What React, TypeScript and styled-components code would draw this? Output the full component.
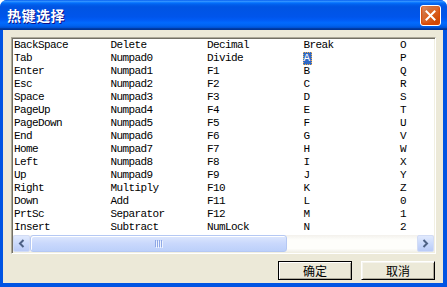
import React from 'react';
import styled, { createGlobalStyle } from 'styled-components';

const GlobalStyle = createGlobalStyle`
  html, body {
    margin: 0;
    padding: 0;
    background: #ffffff;
  }
`;

const columns: string[][] = [
  ['BackSpace', 'Tab', 'Enter', 'Esc', 'Space', 'PageUp', 'PageDown', 'End', 'Home', 'Left', 'Up', 'Right', 'Down', 'PrtSc', 'Insert'],
  ['Delete', 'Numpad0', 'Numpad1', 'Numpad2', 'Numpad3', 'Numpad4', 'Numpad5', 'Numpad6', 'Numpad7', 'Numpad8', 'Numpad9', 'Multiply', 'Add', 'Separator', 'Subtract'],
  ['Decimal', 'Divide', 'F1', 'F2', 'F3', 'F4', 'F5', 'F6', 'F7', 'F8', 'F9', 'F10', 'F11', 'F12', 'NumLock'],
  ['Break', 'A', 'B', 'C', 'D', 'E', 'F', 'G', 'H', 'I', 'J', 'K', 'L', 'M', 'N'],
  ['O', 'P', 'Q', 'R', 'S', 'T', 'U', 'V', 'W', 'X', 'Y', 'Z', '0', '1', '2'],
];

const keys = columns.flat();

const HotkeyDialog = () => {
  return (
    <Window>
      <TitleBar>
        <Title>热键选择</Title>
        <CloseButton>
          <svg width="11" height="11" viewBox="0 0 11 11">
            <path d="M1.5 1.5 L9.5 9.5 M9.5 1.5 L1.5 9.5" stroke="#ffffff" strokeWidth="2" strokeLinecap="square" />
          </svg>
        </CloseButton>
      </TitleBar>
      <Client>
        <ListBox>
          <Items>
            {keys.map((k) => (
              <Item key={k}>
                <Label $selected={k === 'A'}>{k}</Label>
              </Item>
            ))}
          </Items>
          <ScrollBar>
            <ArrowButton>
              <svg width="7" height="9" viewBox="0 0 7 9">
                <path d="M5.5 1 L2 4.5 L5.5 8" stroke="#4d6185" strokeWidth="2" fill="none" />
              </svg>
            </ArrowButton>
            <Thumb>
              <Grip>
                <i />
                <i />
                <i />
                <i />
              </Grip>
            </Thumb>
            <Track />
            <ArrowButton>
              <svg width="7" height="9" viewBox="0 0 7 9">
                <path d="M1.5 1 L5 4.5 L1.5 8" stroke="#4d6185" strokeWidth="2" fill="none" />
              </svg>
            </ArrowButton>
          </ScrollBar>
        </ListBox>
        <ButtonRow>
          <Button $default>确定</Button>
          <Button>取消</Button>
        </ButtonRow>
      </Client>
    </Window>
  );
};

export default function App() {
  return (
    <>
      <GlobalStyle />
      <HotkeyDialog />
    </>
  );
}

const Window = styled.div`
  width: 447px;
  height: 287px;
  display: flex;
  flex-direction: column;
  background: #0054e3;
  border-radius: 7px 7px 0 0;
  overflow: hidden;
  box-sizing: border-box;
`;

const TitleBar = styled.div`
  height: 30px;
  flex: none;
  display: flex;
  align-items: center;
  justify-content: space-between;
  padding: 0 6px 0 7px;
  background: linear-gradient(
    to bottom,
    #0058ee 0%,
    #3593ff 4%,
    #288eff 6%,
    #127dff 8%,
    #036ffc 10%,
    #0262ee 14%,
    #0057e5 20%,
    #0054e3 24%,
    #0055eb 56%,
    #005bf5 66%,
    #026afe 76%,
    #0062ef 86%,
    #0052d6 92%,
    #0040ab 94%,
    #003092 100%
  );
`;

const Title = styled.span`
  font-family: 'Noto Sans CJK SC', sans-serif;
  font-size: 14px;
  font-weight: bold;
  color: #ffffff;
  text-shadow: 1px 1px #0f1089;
  letter-spacing: 0.5px;
  margin-top: -1px;
`;

const CloseButton = styled.div`
  width: 21px;
  height: 21px;
  box-sizing: border-box;
  display: flex;
  align-items: center;
  justify-content: center;
  border: 1px solid #ffffff;
  border-radius: 3px;
  background: radial-gradient(circle at 85% 85%, #cc4600 0%, #dc6527 55%, #cd7546 70%, #e38a5e 90%);
  box-shadow: inset 0 -1px 2px 1px #da4600;
`;

const Client = styled.div`
  flex: 1;
  margin: 0 4px 4px 3px;
  background: #ece9d8;
  padding: 7px 7px 0 8px;
  display: flex;
  flex-direction: column;
`;

const ListBox = styled.div`
  width: 425px;
  height: 217px;
  box-sizing: border-box;
  background: #ffffff;
  border: 1px solid;
  border-color: #aca899 #ffffff #ffffff #aca899;
  box-shadow: inset 1px 1px #716f64, inset -1px -1px #f1efe2;
  padding: 1px;
  display: flex;
  flex-direction: column;
  overflow: hidden;
`;

const Items = styled.div`
  height: 196px;
  display: grid;
  grid-auto-flow: column;
  grid-template-rows: repeat(15, 13px);
  grid-auto-columns: 96.5px;
  align-content: start;
  overflow: hidden;
`;

const Item = styled.div`
  display: flex;
  align-items: center;
  height: 13px;
`;

const Label = styled.span<{ $selected?: boolean }>`
  font-family: 'Liberation Mono', monospace;
  font-size: 11px;
  letter-spacing: -0.6px;
  line-height: 11px;
  padding: 0 1px 0 0;
  border: 1px dotted ${(p) => (p.$selected ? '#f0b050' : 'transparent')};
  background: ${(p) => (p.$selected ? '#316ac5' : 'transparent')};
  color: ${(p) => (p.$selected ? '#ffffff' : '#000000')};
  white-space: nowrap;
`;

const ScrollBar = styled.div`
  height: 17px;
  flex: none;
  display: flex;
  background: linear-gradient(to bottom, #f3f1ec 0%, #fefefb 30%, #fefefb 80%, #f0efe8 100%);
`;

const ArrowButton = styled.div`
  width: 17px;
  height: 17px;
  box-sizing: border-box;
  display: flex;
  align-items: center;
  justify-content: center;
  border: 1px solid #d2dcf5;
  border-radius: 2px;
  background: linear-gradient(to bottom, #e0e9fd 0%, #cbdafc 50%, #b9cbf7 100%);
`;

const Thumb = styled.div`
  width: 257px;
  height: 17px;
  box-sizing: border-box;
  display: flex;
  align-items: center;
  justify-content: center;
  border: 1px solid #b5c8f3;
  border-radius: 3px;
  background: linear-gradient(to bottom, #dde7fd 0%, #c9d8fc 50%, #bcd0fa 100%);
  box-shadow: inset 1px 1px #ffffff;
`;

const Grip = styled.div`
  display: flex;
  gap: 1px;

  i {
    display: block;
    width: 1px;
    height: 7px;
    background: #8ea8e6;
    box-shadow: 1px 1px #eef3fe;
  }
`;

const Track = styled.div`
  flex: 1;
`;

const ButtonRow = styled.div`
  display: flex;
  justify-content: flex-end;
  gap: 9px;
  margin-top: 7px;
  padding-right: 1px;
`;

const Button = styled.div<{ $default?: boolean }>`
  width: 74px;
  height: 19px;
  box-sizing: border-box;
  display: flex;
  align-items: center;
  justify-content: center;
  font-family: 'Noto Sans CJK SC', sans-serif;
  font-size: 12px;
  color: #000000;
  background: #ece9d8;
  border: 1px solid ${(p) => (p.$default ? '#000000' : '#ffffff')};
  border-right-color: #000000;
  border-bottom-color: #000000;
  box-shadow: ${(p) =>
    p.$default
      ? 'inset 1px 1px #ffffff, inset -1px -1px #aca899'
      : 'inset 1px 1px #f5f4ee, inset -1px -1px #aca899'};
`;
